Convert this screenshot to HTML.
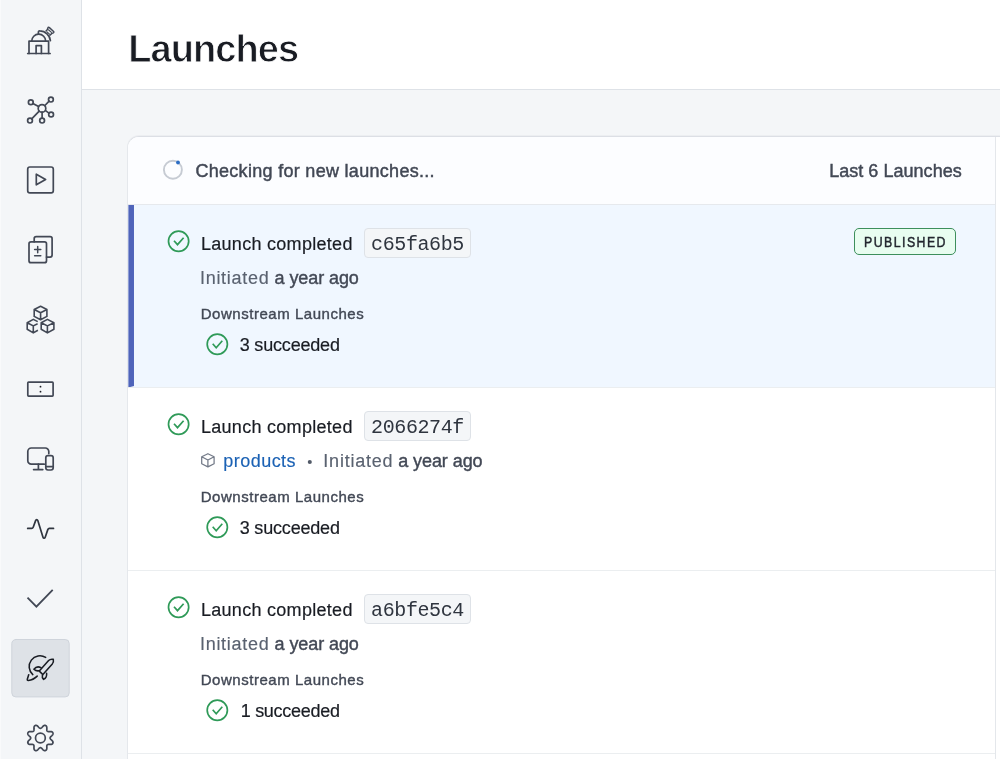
<!DOCTYPE html>
<html><head><meta charset="utf-8"><title>Launches</title>
<style>
html,body{margin:0;padding:0;width:1000px;height:759px;overflow:hidden;background:#f4f6f8;font-family:"Liberation Sans",sans-serif;}
div,span,svg{position:absolute;box-sizing:border-box;}
#side{left:0;top:0;width:82px;height:759px;background:#f4f6f8;border-right:1px solid #dee2e7;box-shadow:inset 1px 0 0 #f9fafb;}
#head{left:82px;top:0;width:918px;height:90px;background:#fff;border-bottom:1px solid #dee2e7;}
#card{left:127px;top:136px;width:901px;box-shadow:0 -1px 0 #eceef1;height:640px;background:#fff;border:1px solid #e5e8ec;border-top-color:#dcdfe5;border-radius:12px 0 0 0;overflow:hidden;}
#vdiv{left:867px;top:0;width:1px;height:640px;background:#e4e7eb;}
#chead{left:0;top:0;width:867px;height:68px;background:#fcfdff;border-bottom:1px solid #e6e9ed;}
.row{left:0;width:867px;height:183px;border-bottom:1px solid #ebeef0;}
#r0{top:68px;background:#f0f7ff;}
#r1{top:251px;}
#r2{top:434px;}
#bar{left:128.4px;top:205px;width:5.6px;height:182.4px;background:#4f64ba;clip-path:polygon(0 0,100% 0,100% 99.2%,0 100%);}
.hash{left:364px;width:107px;height:30px;background:#f4f6f8;border:1px solid #dee2e7;border-radius:4px;}
#badge{left:853.7px;top:227.5px;width:102.3px;height:27.6px;background:#e8fdf0;border:1px solid #3d8f5c;border-radius:5px;}
.t{white-space:pre;transform-origin:0 0;}
#txt{left:0;top:0;width:1000px;height:759px;filter:blur(0.3px);}
#nav,#ico{left:0;top:0;}
#title{left:128.15px;top:21px;font:700 38px/57px "Liberation Sans",sans-serif;letter-spacing:-0.9px;color:#191c23;-webkit-text-stroke:0.9px #fff;}
#chk{left:195.40px;top:158px;font:400 18px/27px "Liberation Sans",sans-serif;letter-spacing:0.3px;color:#424855;-webkit-text-stroke:0.45px #424855;}
#last{left:829.20px;top:158px;font:400 18px/27px "Liberation Sans",sans-serif;letter-spacing:0.03px;color:#424855;-webkit-text-stroke:0.45px #424855;}
#pub{left:863.65px;top:232px;font:400 14px/21px "Liberation Sans",sans-serif;letter-spacing:1.66px;color:#22262e;-webkit-text-stroke:0.45px #22262e;transform:scaleX(0.88);}
#lc0{left:200.95px;top:231px;font:400 18px/27px "Liberation Sans",sans-serif;letter-spacing:0.29px;color:#191c23;-webkit-text-stroke:0.2px #191c23;}
#hash0{left:371.10px;top:230px;font:400 20px/30px "Liberation Mono",monospace;letter-spacing:-0.4px;color:#2f353f;}
#ds0{left:200.75px;top:303px;font:400 15px/22px "Liberation Sans",sans-serif;letter-spacing:0.53px;color:#424855;-webkit-text-stroke:0.38px #424855;}
#su0{left:239.70px;top:332px;font:400 18px/27px "Liberation Sans",sans-serif;letter-spacing:-0.18px;color:#191c23;-webkit-text-stroke:0.2px #191c23;}
#in0{left:200.00px;top:265px;font:400 18px/27px "Liberation Sans",sans-serif;letter-spacing:0.7px;color:#5a6270;-webkit-text-stroke:0.15px #5a6270;}
#ya0{left:274.60px;top:265px;font:400 18px/27px "Liberation Sans",sans-serif;letter-spacing:-0.09px;color:#424855;-webkit-text-stroke:0.4px #424855;}
#lc183{left:200.95px;top:414px;font:400 18px/27px "Liberation Sans",sans-serif;letter-spacing:0.29px;color:#191c23;-webkit-text-stroke:0.2px #191c23;}
#hash183{left:371.10px;top:413px;font:400 20px/30px "Liberation Mono",monospace;letter-spacing:-0.4px;color:#2f353f;}
#ds183{left:200.75px;top:486px;font:400 15px/22px "Liberation Sans",sans-serif;letter-spacing:0.53px;color:#424855;-webkit-text-stroke:0.38px #424855;}
#su183{left:239.70px;top:515px;font:400 18px/27px "Liberation Sans",sans-serif;letter-spacing:-0.18px;color:#191c23;-webkit-text-stroke:0.2px #191c23;}
#pr183{left:223.25px;top:448px;font:400 18px/27px "Liberation Sans",sans-serif;letter-spacing:0.47px;color:#1c62b4;-webkit-text-stroke:0.15px #1c62b4;}
#in183{left:323.35px;top:448px;font:400 18px/27px "Liberation Sans",sans-serif;letter-spacing:0.76px;color:#5a6270;-webkit-text-stroke:0.15px #5a6270;}
#ya183{left:398.20px;top:448px;font:400 18px/27px "Liberation Sans",sans-serif;letter-spacing:-0.07px;color:#424855;-webkit-text-stroke:0.4px #424855;}
#lc366{left:200.95px;top:597px;font:400 18px/27px "Liberation Sans",sans-serif;letter-spacing:0.29px;color:#191c23;-webkit-text-stroke:0.2px #191c23;}
#hash366{left:371.10px;top:596px;font:400 20px/30px "Liberation Mono",monospace;letter-spacing:-0.4px;color:#2f353f;}
#ds366{left:200.75px;top:669px;font:400 15px/22px "Liberation Sans",sans-serif;letter-spacing:0.53px;color:#424855;-webkit-text-stroke:0.38px #424855;}
#su366{left:240.70px;top:698px;font:400 18px/27px "Liberation Sans",sans-serif;letter-spacing:-0.28px;color:#191c23;-webkit-text-stroke:0.2px #191c23;}
#in366{left:200.00px;top:631px;font:400 18px/27px "Liberation Sans",sans-serif;letter-spacing:0.7px;color:#5a6270;-webkit-text-stroke:0.15px #5a6270;}
#ya366{left:274.60px;top:631px;font:400 18px/27px "Liberation Sans",sans-serif;letter-spacing:-0.09px;color:#424855;-webkit-text-stroke:0.4px #424855;}
</style></head><body>
<div id="side"></div>
<div id="head"></div>
<div id="card"><div id="chead"></div><div class="row" id="r0"></div><div class="row" id="r1"></div><div class="row" id="r2"></div><div id="vdiv"></div></div>
<div id="bar"></div>
<div class="hash" style="top:228px"></div><div class="hash" style="top:411px"></div><div class="hash" style="top:594px"></div>
<div id="badge"></div>
<svg id="nav" width="82" height="759" viewBox="0 0 82 759" fill="none" stroke="#424855" stroke-width="1.7" stroke-linecap="round" stroke-linejoin="round">
<!-- observatory -->
<g>
<path d="M27.7 53.5H50.1"/>
<path d="M29 53.5V41.2H48.6V53.5"/>
<path d="M31.7 41.2A7 7 0 0 1 45.7 41.2"/>
<path d="M36.1 53.5V45.6H41.4V53.5"/>
<path d="M38.4 34.2V32.3Q38.4 30.8 39.9 30.9A10.8 10.8 0 0 1 50.4 40.7"/>
<path d="M46 30.9L47.2 29.7L47.9 27.9Q48.4 26.7 49.4 27.6L53.6 31.5Q54.3 32.3 53.4 32.8L51.9 33.4L49.9 35.2" stroke-width="1.45"/>
<path d="M48.5 29.8L51.4 32.4M47 31.9L49.5 34.1" stroke-width="1.15"/>
</g>
<!-- graph -->
<g>
<circle cx="42" cy="108.4" r="3.8"/>
<circle cx="30.8" cy="102.3" r="2.4"/><circle cx="50.9" cy="99.6" r="2.4"/><circle cx="51.1" cy="114.5" r="2.4"/><circle cx="42.1" cy="120.6" r="2.4"/><circle cx="30" cy="120.6" r="2.4"/>
<path d="M32.9 103.5L38.6 106.6M49.1 101.2L44.9 105.5M48.9 113.1L45.6 110.6M42.1 112.2V118.2M39.2 111.1L31.7 118.9"/>
</g>
<!-- play -->
<g>
<rect x="27.7" y="167" width="25.6" height="25.9" rx="2.2"/>
<path d="M36.3 174.2V184.8L45.6 179.4Z"/>
</g>
<!-- diff -->
<g>
<rect x="29" y="241.8" width="17.5" height="20.9" rx="2"/>
<path d="M34.2 241.8V238.7A2 2 0 0 1 36.2 236.7H50.1A2 2 0 0 1 52.1 238.7V255.1A2 2 0 0 1 50.1 257.1H46.5"/>
<path d="M34.6 249.6H40.8M37.7 246.5V252.7M34.6 255.8H40.8" stroke-width="1.5"/>
</g>
<!-- cubes -->
<g stroke-linejoin="round" stroke-linecap="butt" stroke-width="1.6">
<path d="M40.6 306.2L46.9 309.5V316.4L40.6 319.7L34.2 316.4V309.5ZM34.2 309.5L40.6 312.8L46.9 309.5M40.6 312.8V319.7"/>
<path d="M47.4 319.4L53.9 322.7V329.2L47.4 332.9L41.2 329.2V322.7ZM41.2 322.7L47.4 325.9L53.9 322.7M47.4 325.9V332.9"/>
<path d="M37.7 321.6L33.3 319.4L27.2 322.7V329.2L33.3 332.9L37.9 330.2M27.2 322.7L33.3 325.9L37.6 323.7M33.3 325.9V332.9"/>
</g>
<!-- field -->
<g>
<rect x="27.8" y="382.1" width="25.3" height="14" rx="0.8"/>
<circle cx="40.5" cy="386.7" r="0.9" fill="#191c23" stroke="none"/><circle cx="40.5" cy="391.7" r="0.9" fill="#191c23" stroke="none"/>
</g>
<!-- devices -->
<g>
<path d="M48.8 453.6V451.5A3.5 3.5 0 0 0 45.3 448H31.3A3.5 3.5 0 0 0 27.8 451.5V460.7A3.5 3.5 0 0 0 31.3 464.2H44.2"/>
<path d="M38.4 464.2V469.6M33.6 469.6H42.8"/>
<rect x="45.8" y="455.6" width="7.4" height="14.4" rx="2.2"/>
<path d="M45.8 466.6H53.2"/>
</g>
<!-- pulse -->
<path d="M27.7 528.4H31.6C32.4 528.4 32.9 528 33.2 527.2L35.6 520.6C36.1 519.2 37.3 519.2 37.8 520.6L43 537.2C43.4 538.6 44.7 538.6 45.2 537.2L47.8 529.6C48.1 528.8 48.6 528.4 49.4 528.4H53.5" stroke="#2f353f"/>
<!-- check -->
<path d="M27.5 597.7L36.4 606.7L52.7 589.8" stroke-linecap="butt" stroke-linejoin="miter" stroke-width="1.8"/>
<!-- selected -->
<rect x="11.8" y="639.5" width="57.4" height="57.4" rx="4" fill="#dee2e7" stroke="#cfd4db" stroke-width="1"/>
<!-- rocket -->
<g stroke="#191c23" stroke-width="1.55">
<path d="M45.66 657.46A10.75 10.75 0 0 0 32.8 674.6"/>
<path d="M28.7 674.7L27.3 679.3Q27.1 680.5 28.3 680.4C31.6 680.1 34.8 678.5 37.2 676.1"/>
<path d="M53.3 659.3C51.6 659 49.8 659.3 48.6 660.5L39.3 671.1L42.9 674.6L52.3 663.9C53.3 662.6 53.7 661 53.3 659.3Z"/>
<path d="M41 667.6C38.6 666.4 35.6 667 33.9 669.2C35.4 670.6 37 671.1 38.8 670.8"/>
<path d="M46.6 673.3C46.9 675.6 45.8 678.2 43.6 679.4C42.4 678.2 42 676.8 42.4 675.4"/>
</g>
<!-- gear -->
<path d="M50.10 738.00 L50.12 738.25 L50.20 738.51 L50.34 738.78 L50.54 739.07 L50.82 739.37 L51.17 739.71 L51.57 740.07 L51.98 740.46 L52.35 740.87 L52.65 741.28 L52.87 741.69 L52.98 742.09 L53.02 742.47 L52.98 742.83 L52.87 743.17 L52.71 743.48 L52.48 743.76 L52.19 744.01 L51.82 744.20 L51.39 744.34 L50.88 744.42 L50.33 744.45 L49.76 744.44 L49.22 744.41 L48.74 744.40 L48.33 744.42 L47.98 744.47 L47.69 744.57 L47.46 744.70 L47.26 744.86 L47.10 745.06 L46.97 745.29 L46.87 745.58 L46.82 745.93 L46.80 746.34 L46.81 746.82 L46.84 747.36 L46.85 747.93 L46.82 748.48 L46.74 748.99 L46.60 749.42 L46.41 749.79 L46.16 750.08 L45.88 750.31 L45.57 750.47 L45.23 750.58 L44.87 750.62 L44.49 750.58 L44.09 750.47 L43.68 750.25 L43.27 749.95 L42.86 749.58 L42.47 749.17 L42.11 748.77 L41.77 748.42 L41.47 748.14 L41.18 747.94 L40.91 747.80 L40.65 747.72 L40.40 747.70 L40.15 747.72 L39.89 747.80 L39.62 747.94 L39.33 748.14 L39.03 748.42 L38.69 748.77 L38.33 749.17 L37.94 749.58 L37.53 749.95 L37.12 750.25 L36.71 750.47 L36.31 750.58 L35.93 750.62 L35.57 750.58 L35.23 750.47 L34.92 750.31 L34.64 750.08 L34.39 749.79 L34.20 749.42 L34.06 748.99 L33.98 748.48 L33.95 747.93 L33.96 747.36 L33.99 746.82 L34.00 746.34 L33.98 745.93 L33.93 745.58 L33.83 745.29 L33.70 745.06 L33.54 744.86 L33.34 744.70 L33.11 744.57 L32.82 744.47 L32.47 744.42 L32.06 744.40 L31.58 744.41 L31.04 744.44 L30.47 744.45 L29.92 744.42 L29.41 744.34 L28.98 744.20 L28.61 744.01 L28.32 743.76 L28.09 743.48 L27.93 743.17 L27.82 742.83 L27.78 742.47 L27.82 742.09 L27.93 741.69 L28.15 741.28 L28.45 740.87 L28.82 740.46 L29.23 740.07 L29.63 739.71 L29.98 739.37 L30.26 739.07 L30.46 738.78 L30.60 738.51 L30.68 738.25 L30.70 738.00 L30.68 737.75 L30.60 737.49 L30.46 737.22 L30.26 736.93 L29.98 736.63 L29.63 736.29 L29.23 735.93 L28.82 735.54 L28.45 735.13 L28.15 734.72 L27.93 734.31 L27.82 733.91 L27.78 733.53 L27.82 733.17 L27.93 732.83 L28.09 732.52 L28.32 732.24 L28.61 731.99 L28.98 731.80 L29.41 731.66 L29.92 731.58 L30.47 731.55 L31.04 731.56 L31.58 731.59 L32.06 731.60 L32.47 731.58 L32.82 731.53 L33.11 731.43 L33.34 731.30 L33.54 731.14 L33.70 730.94 L33.83 730.71 L33.93 730.42 L33.98 730.07 L34.00 729.66 L33.99 729.18 L33.96 728.64 L33.95 728.07 L33.98 727.52 L34.06 727.01 L34.20 726.58 L34.39 726.21 L34.64 725.92 L34.92 725.69 L35.23 725.53 L35.57 725.42 L35.93 725.38 L36.31 725.42 L36.71 725.53 L37.12 725.75 L37.53 726.05 L37.94 726.42 L38.33 726.83 L38.69 727.23 L39.03 727.58 L39.33 727.86 L39.62 728.06 L39.89 728.20 L40.15 728.28 L40.40 728.30 L40.65 728.28 L40.91 728.20 L41.18 728.06 L41.47 727.86 L41.77 727.58 L42.11 727.23 L42.47 726.83 L42.86 726.42 L43.27 726.05 L43.68 725.75 L44.09 725.53 L44.49 725.42 L44.87 725.38 L45.23 725.42 L45.57 725.53 L45.88 725.69 L46.16 725.92 L46.41 726.21 L46.60 726.58 L46.74 727.01 L46.82 727.52 L46.85 728.07 L46.84 728.64 L46.81 729.18 L46.80 729.66 L46.82 730.07 L46.87 730.42 L46.97 730.71 L47.10 730.94 L47.26 731.14 L47.46 731.30 L47.69 731.43 L47.98 731.53 L48.33 731.58 L48.74 731.60 L49.22 731.59 L49.76 731.56 L50.33 731.55 L50.88 731.58 L51.39 731.66 L51.82 731.80 L52.19 731.99 L52.48 732.24 L52.71 732.52 L52.87 732.83 L52.98 733.17 L53.02 733.53 L52.98 733.91 L52.87 734.31 L52.65 734.72 L52.35 735.13 L51.98 735.54 L51.57 735.93 L51.17 736.29 L50.82 736.63 L50.54 736.93 L50.34 737.22 L50.20 737.49 L50.12 737.75Z"/>
<circle cx="40.4" cy="738" r="4.9"/>
</svg>
<svg id="ico" width="1000" height="759" viewBox="0 0 1000 759" fill="none"><circle cx="172.9" cy="169.8" r="9" stroke="#c6cbd3" stroke-width="1.9"/><circle cx="178" cy="162.5" r="1.9" fill="#2b6dc4"/><circle cx="178.6" cy="241.2" r="10.1" stroke="#2f9a58" stroke-width="1.7"/><path d="M174.0 240.7 L177.5 244.6 L183.6 237.7" stroke="#2f9a58" stroke-width="1.7"/><circle cx="217.3" cy="344.3" r="10.1" stroke="#2f9a58" stroke-width="1.7"/><path d="M212.7 343.8 L216.2 347.7 L222.3 340.8" stroke="#2f9a58" stroke-width="1.7"/><circle cx="178.6" cy="424.2" r="10.1" stroke="#2f9a58" stroke-width="1.7"/><path d="M174.0 423.7 L177.5 427.6 L183.6 420.7" stroke="#2f9a58" stroke-width="1.7"/><circle cx="217.3" cy="527.3" r="10.1" stroke="#2f9a58" stroke-width="1.7"/><path d="M212.7 526.8 L216.2 530.7 L222.3 523.8" stroke="#2f9a58" stroke-width="1.7"/><circle cx="178.6" cy="607.2" r="10.1" stroke="#2f9a58" stroke-width="1.7"/><path d="M174.0 606.7 L177.5 610.6 L183.6 603.7" stroke="#2f9a58" stroke-width="1.7"/><circle cx="217.3" cy="710.3" r="10.1" stroke="#2f9a58" stroke-width="1.7"/><path d="M212.7 709.8 L216.2 713.7 L222.3 706.8" stroke="#2f9a58" stroke-width="1.7"/><path d="M207.9 453.7L214.1 456.8V463.8L207.9 466.9L201.7 463.8V456.8ZM201.7 456.8L207.9 460L214.1 456.8M207.9 460V466.9" stroke="#737a88" stroke-width="1.25" stroke-linejoin="round"/><circle cx="309.8" cy="462" r="2.05" fill="#525a68"/></svg>
<div id="txt">
<span class="t" id="title">Launches</span>
<span class="t" id="chk">Checking for new launches...</span>
<span class="t" id="last">Last 6 Launches</span>
<span class="t" id="pub">PUBLISHED</span>
<span class="t" id="lc0">Launch completed</span>
<span class="t" id="hash0">c65fa6b5</span>
<span class="t" id="ds0">Downstream Launches</span>
<span class="t" id="su0">3 succeeded</span>
<span class="t" id="in0">Initiated</span>
<span class="t" id="ya0">a year ago</span>
<span class="t" id="lc183">Launch completed</span>
<span class="t" id="hash183">2066274f</span>
<span class="t" id="ds183">Downstream Launches</span>
<span class="t" id="su183">3 succeeded</span>
<span class="t" id="pr183">products</span>
<span class="t" id="in183">Initiated</span>
<span class="t" id="ya183">a year ago</span>
<span class="t" id="lc366">Launch completed</span>
<span class="t" id="hash366">a6bfe5c4</span>
<span class="t" id="ds366">Downstream Launches</span>
<span class="t" id="su366">1 succeeded</span>
<span class="t" id="in366">Initiated</span>
<span class="t" id="ya366">a year ago</span>
</div>
</body></html>
